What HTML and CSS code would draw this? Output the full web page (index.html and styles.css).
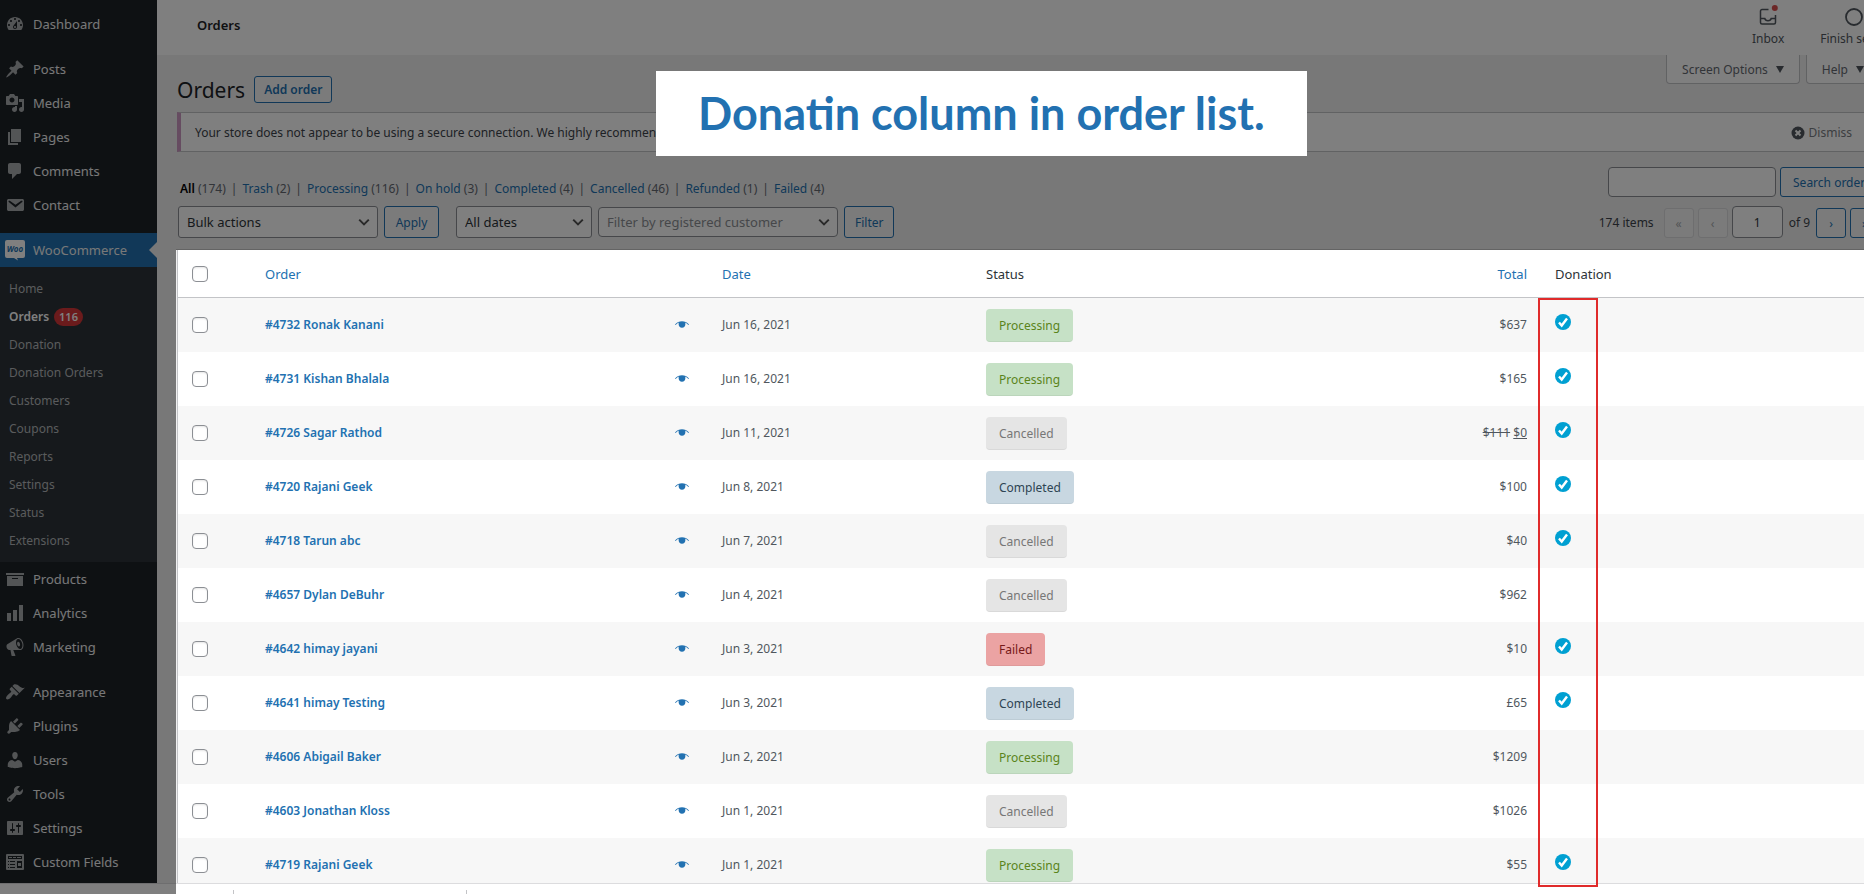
FILE: index.html
```
<!DOCTYPE html>
<html lang="en">
<head>
  <meta charset="UTF-8" />
  <meta name="viewport" content="width=device-width, initial-scale=1.0"/>
  <title>Orders</title>
  <link rel="stylesheet" href="styles.css">
</head>
<body>
  <svg class="sprite" aria-hidden="true">
    <symbol id="eye" viewBox="0 0 14 8">
      <path d="M0 3.600C2 1.300 4.300 .3 7 .3s5 1 7 3.300l-.6.5C12.300 2.900 11.300 2 10.200 1.500c.1.400.2.900.2 1.500C10.400 5.200 9 6.700 7 6.700S3.600 5.200 3.600 3c0-.6.1-1.100.2-1.500C2.700 2 1.700 2.900.6 4.100z"/>
    </symbol>
    <symbol id="check" viewBox="0 0 16 16">
      <circle cx="8" cy="8" r="8"/>
      <path d="M4 8.500l2.700 3L12 4.500" fill="none" stroke="#fff" stroke-width="2.400"/>
    </symbol>
  </svg>

  <div class="app">
    <nav class="sidebar">
      <ul class="menu">
        <li><a href="#"><svg viewBox="0 0 20 20"><path d="M3.76 16h12.480c1.100-1.370 1.760-3.110 1.760-5 0-4.420-3.580-8-8-8s-8 3.580-8 8c0 1.890.66 3.630 1.760 5zM10 4c.55 0 1 .45 1 1s-.45 1-1 1-1-.45-1-1 .45-1 1-1zM6 6c.55 0 1 .45 1 1s-.45 1-1 1-1-.45-1-1 .45-1 1-1zm8 0c.55 0 1 .45 1 1s-.45 1-1 1-1-.45-1-1 .45-1 1-1zm-5.370 5.550L12 7v6c0 1.100-.9 2-2 2s-2-.9-2-2c0-.57.24-1.080.63-1.450zM4 10c.55 0 1 .45 1 1s-.45 1-1 1-1-.45-1-1 .45-1 1-1zm12 0c.55 0 1 .45 1 1s-.45 1-1 1-1-.45-1-1 .45-1 1-1zm-5 3c0-.55-.45-1-1-1s-1 .45-1 1 .45 1 1 1 1-.45 1-1z"/></svg>Dashboard</a></li>
        <li class="separator"></li>
        <li><a href="#"><svg viewBox="0 0 20 20"><path d="M10.440 3.020l1.820-1.820 6.360 6.350-1.830 1.820c-1.050-.68-2.480-.57-3.410.36l-.75.75c-.92.93-1.040 2.350-.35 3.410l-1.830 1.820-2.410-2.410-2.800 2.790c-.42.42-3.380 2.710-3.800 2.290s1.860-3.390 2.280-3.810l2.790-2.790L4.100 9.360l1.830-1.820c1.050.69 2.480.57 3.400-.36l.75-.75c.93-.92 1.050-2.350.36-3.410z"/></svg>Posts</a></li>
        <li><a href="#"><svg viewBox="0 0 20 20"><path d="M13 11V4c0-.55-.45-1-1-1h-1.670L9 1H5L3.670 3H2c-.55 0-1 .45-1 1v7c0 .55.45 1 1 1h10c.55 0 1-.45 1-1zM7 4.500c1.380 0 2.500 1.120 2.500 2.500S8.380 9.500 7 9.500 4.500 8.380 4.500 7 5.620 4.500 7 4.500zM14 6h5v10.500c0 1.380-1.120 2.500-2.500 2.500S14 17.880 14 16.500s1.120-2.500 2.500-2.500c.17 0 .34.02.5.05V9h-3V6zm-4 8.050V13h2v3.500c0 1.380-1.120 2.500-2.500 2.500S7 17.880 7 16.500 8.120 14 9.500 14c.17 0 .34.02.5.05z"/></svg>Media</a></li>
        <li><a href="#"><svg viewBox="0 0 20 20"><path d="M6 15V2h10v13H6zm-1 1h8v2H3V5h2v11z"/></svg>Pages</a></li>
        <li><a href="#"><svg viewBox="0 0 20 20"><path d="M5 2h9c1.100 0 2 .9 2 2v7c0 1.100-.9 2-2 2h-2l-5 5v-5H5c-1.100 0-2-.9-2-2V4c0-1.100.9-2 2-2z"/></svg>Comments</a></li>
        <li><a href="#"><svg viewBox="0 0 20 20"><path d="M3.870 4h13.250C18.370 4 19 4.590 19 5.790v8.420c0 1.190-.63 1.790-1.880 1.790H3.870c-1.250 0-1.880-.6-1.880-1.790V5.790c0-1.200.63-1.790 1.880-1.790zm6.620 8.600l6.740-5.530c.24-.2.43-.66.13-1.070-.29-.41-.82-.42-1.170-.17l-5.700 3.860L4.800 5.830c-.35-.25-.88-.24-1.170.17-.3.41-.11.87.13 1.070z"/></svg>Contact</a></li>
        <li class="separator"></li>
        <li class="current">
          <a href="#"><svg viewBox="0 0 20 20"><path fill="#fff" d="M2 0h16a2 2 0 0 1 2 2v14a2 2 0 0 1-2 2h-6l1 2.500L9 18H2a2 2 0 0 1-2-2V2a2 2 0 0 1 2-2z"/><text x="10" y="12" text-anchor="middle" class="woo">Woo</text></svg>WooCommerce</a>
          <ul class="submenu">
            <li><a href="#">Home</a></li>
            <li><a href="#" class="active">Orders <span class="count">116</span></a></li>
            <li><a href="#">Donation</a></li>
            <li><a href="#">Donation Orders</a></li>
            <li><a href="#">Customers</a></li>
            <li><a href="#">Coupons</a></li>
            <li><a href="#">Reports</a></li>
            <li><a href="#">Settings</a></li>
            <li><a href="#">Status</a></li>
            <li><a href="#">Extensions</a></li>
          </ul>
        </li>
        <li><a href="#"><svg viewBox="0 0 20 20"><path d="M19 4v2H1V4h18zM2 7h16v10H2V7zm11 3V9H7v1h6z"/></svg>Products</a></li>
        <li><a href="#"><svg viewBox="0 0 20 20"><path d="M18 18V2h-4v16h4zm-6 0V7H8v11h4zm-6 0v-8H2v8h4z"/></svg>Analytics</a></li>
        <li><a href="#"><svg viewBox="0 0 20 20"><path d="M18.150 5.940c.46 1.620.38 3.220-.02 4.480-.42 1.280-1.260 2.180-2.300 2.480-.16.06-.26.06-.4.06-.06.02-.12.02-.18.02-.06.02-.14.02-.22.02h-6.800l2.220 5.500c.02.14-.06.26-.14.34-.08.1-.24.16-.34.16H6.950c-.1 0-.26-.06-.34-.16-.08-.08-.16-.2-.14-.34l-1-5.500H4.250l-.02-.02c-.5.06-1.080-.18-1.540-.62s-.88-1.080-1.060-1.880c-.24-.8-.2-1.560-.02-2.200.18-.62.58-1.080 1.060-1.300l.02-.02 9-5.400c.1-.06.18-.1.24-.16.06-.04.14-.08.24-.12.16-.08.28-.12.5-.18 1.040-.3 2.240.1 3.220.98s1.840 2.240 2.260 3.860zm-2.580 5.980h-.02c.4-.1.74-.34 1.040-.7.58-.7.86-1.760.86-3.040 0-.64-.1-1.300-.28-1.980-.34-1.360-1.020-2.500-1.780-3.240s-1.680-1.100-2.460-.88c-.82.22-1.400.96-1.700 2-.32 1.040-.28 2.360.06 3.720.38 1.360 1 2.500 1.800 3.240.78.74 1.620 1.100 2.480.88zm-2.540-7.080c.22-.04.42-.02.62.04.38.16.76.48 1.020 1s.42 1.200.42 1.780c0 .3-.04.56-.12.8-.18.48-.44.84-.86.94-.34.1-.8-.06-1.140-.4s-.64-.86-.78-1.500c-.18-.62-.12-1.240.02-1.720s.48-.84.82-.94z"/></svg>Marketing</a></li>
        <li class="separator"></li>
        <li><a href="#"><svg viewBox="0 0 20 20"><path d="M14.480 11.060L7.410 3.990l1.500-1.500c.5-.56 2.300-.47 3.510.32 1.210.8 1.430 1.280 2.910 2.100 1.180.64 2.450 1.260 4.450.85zm-.71.71L6.700 4.700 4.930 6.470c-.39.39-.39 1.020 0 1.410l1.060 1.060c.39.39.39 1.030 0 1.420-.6.6-1.430 1.110-2.210 1.690-.35.26-.7.53-1.010.84C1.430 14.230.4 16.080 1.400 17.070c.99 1 2.840-.03 4.180-1.360.31-.31.58-.66.85-1.020.57-.78 1.080-1.610 1.690-2.210.39-.39 1.020-.39 1.410 0l1.060 1.060c.39.39 1.020.39 1.410 0z"/></svg>Appearance</a></li>
        <li><a href="#"><svg viewBox="0 0 20 20"><path d="M13.110 4.360L9.870 7.600 8 5.730l3.240-3.240c.35-.34 1.050-.2 1.560.32.52.51.66 1.210.31 1.550zm-8 1.770l.91-1.120 9.010 9.010-1.190.84c-.71.71-2.630 1.160-3.820 1.160H6.140L4.900 17.260c-.59.59-1.540.59-2.120 0-.59-.58-.59-1.530 0-2.120l1.240-1.240v-3.880c0-1.130.4-3.190 1.090-3.890zm7.260 3.970l3.240-3.240c.34-.35 1.040-.21 1.550.31.52.51.66 1.210.31 1.550l-3.240 3.250z"/></svg>Plugins</a></li>
        <li><a href="#"><svg viewBox="0 0 20 20"><path d="M10 9.250c-2.270 0-2.730-3.440-2.730-3.440C7 4.020 7.820 2 9.970 2c2.160 0 2.980 2.020 2.710 3.810 0 0-.41 3.440-2.680 3.440zm0 2.570L12.720 10c2.390 0 4.520 2.330 4.520 4.530v2.490s-3.650 1.130-7.240 1.130c-3.650 0-7.240-1.130-7.240-1.130v-2.490c0-2.250 1.940-4.480 4.470-4.480z"/></svg>Users</a></li>
        <li><a href="#"><svg viewBox="0 0 20 20"><path d="M16.680 9.770c-1.340 1.340-3.300 1.670-4.950.99l-5.410 6.520c-.99.99-2.590.99-3.580 0s-.99-2.590 0-3.570l6.520-5.420c-.68-1.650-.35-3.610.99-4.950 1.280-1.280 3.120-1.620 4.720-1.060l-2.890 2.890 2.820 2.820 2.860-2.870c.53 1.580.18 3.390-1.080 4.650zM3.810 16.210c.4.39 1.040.39 1.430 0 .4-.4.4-1.040 0-1.430-.39-.4-1.030-.4-1.430 0-.39.39-.39 1.030 0 1.430z"/></svg>Tools</a></li>
        <li><a href="#"><svg viewBox="0 0 20 20"><path d="M18 16V4c0-.55-.45-1-1-1H3c-.55 0-1 .45-1 1v12c0 .55.45 1 1 1h14c.55 0 1-.45 1-1zM8 11h1c.55 0 1 .45 1 1s-.45 1-1 1H8v1.500c0 .28-.22.5-.5.5s-.5-.22-.5-.5V13H6c-.55 0-1-.45-1-1s.45-1 1-1h1V5.500c0-.28.22-.5.5-.5s.5.22.5.5V11zm5-2h-1c-.55 0-1-.45-1-1s.45-1 1-1h1V5.500c0-.28.22-.5.5-.5s.5.22.5.5V7h1c.55 0 1 .45 1 1s-.45 1-1 1h-1v5.500c0 .28-.22.5-.5.5s-.5-.22-.5-.5V9z"/></svg>Settings</a></li>
        <li><a href="#"><svg viewBox="0 0 20 20"><path fill-rule="evenodd" d="M2 2h16a1 1 0 0 1 1 1v14a1 1 0 0 1-1 1H2a1 1 0 0 1-1-1V3a1 1 0 0 1 1-1zM3 4v3h14V4zM3 9v1h1V9zm2 0v1h5V9zM3 12v1h1v-1zm2 0v1h5v-1zM3 15v1h1v-1zm2 0v1h5v-1zM12 9v7h5V9zM4 5h3v1H4zm4 0h3v1H8zm4 0h4v1h-4zM13 11h3v3h-3z"/></svg>Custom Fields</a></li>
      </ul>
    </nav>

    <main class="page">
      <header class="topbar">
        <h2>Orders</h2>
        <div class="activity">
          <button type="button" class="inbox">
            <svg viewBox="0 0 18 18"><path d="M9.500 1.500H3a1.500 1.500 0 0 0-1.500 1.500v11.500A1.500 1.500 0 0 0 3 16h12a1.500 1.500 0 0 0 1.500-1.500V7M1.500 10.500h4.300c.4 1.700 1.500 2.200 3.200 2.200s2.800-.5 3.200-2.200h4.300" fill="none" stroke="#50575e" stroke-width="1.500"/><circle cx="15.800" cy="0" r="3" fill="#d94f4f"/></svg>
            Inbox
          </button>
          <button type="button">
            <svg viewBox="0 0 18 18"><circle cx="9" cy="9" r="8" fill="none" stroke="#50575e" stroke-width="1.800"/></svg>
            Finish setup
          </button>
        </div>
      </header>

      <div class="wrap">
        <div class="heading">
          <h1>Orders</h1>
          <a href="#" class="button add">Add order</a>
          <div class="screen-tabs">
            <button type="button">Screen Options <span class="arrow"></span></button>
            <button type="button">Help <span class="arrow"></span></button>
          </div>
        </div>

        <div class="notice">
          <p>Your store does not appear to be using a secure connection. We highly recommend serving your entire website over an HTTPS connection to help keep customer data secure.</p>
          <a href="#" class="dismiss"><svg viewBox="0 0 14 14"><circle cx="7" cy="7" r="6.500" fill="#50575e"/><path d="M4.500 4.500l5 5m0-5l-5 5" stroke="#fff" stroke-width="2"/></svg>Dismiss</a>
        </div>

        <div class="views-row">
          <ul class="views">
            <li><a href="#" class="all">All</a> (174)</li>
            <li><a href="#">Trash</a> (2)</li>
            <li><a href="#">Processing</a> (116)</li>
            <li><a href="#">On hold</a> (3)</li>
            <li><a href="#">Completed</a> (4)</li>
            <li><a href="#">Cancelled</a> (46)</li>
            <li><a href="#">Refunded</a> (1)</li>
            <li><a href="#">Failed</a> (4)</li>
          </ul>
          <div class="search">
            <input type="search" aria-label="Search orders">
            <button type="button" class="button">Search orders</button>
          </div>
        </div>

        <div class="tablenav">
          <div class="filters">
            <select class="bulk" aria-label="Bulk actions"><option>Bulk actions</option></select>
            <button type="button" class="button apply">Apply</button>
            <select class="dates" aria-label="Filter by date"><option>All dates</option></select>
            <select class="customer" aria-label="Customer"><option>Filter by registered customer</option></select>
            <button type="button" class="button">Filter</button>
          </div>
          <div class="pagination">
            <span class="total-items">174 items</span>
            <button type="button" class="button" disabled>«</button>
            <button type="button" class="button" disabled>‹</button>
            <input type="text" value="1" aria-label="Current page">
            <span class="of">of 9</span>
            <button type="button" class="button">›</button>
            <button type="button" class="button">»</button>
          </div>
        </div>

        <div class="highlight">
          <div class="table-clip">
            <table class="orders">
              <thead>
                <tr>
                  <th class="col-check"><input type="checkbox" aria-label="Select all"></th>
                  <th class="col-order"><a href="#">Order</a></th>
                  <th class="col-date"><a href="#">Date</a></th>
                  <th class="col-status">Status</th>
                  <th class="col-total"><a href="#">Total</a></th>
                  <th class="col-donation">Donation</th>
                </tr>
              </thead>
              <tbody>
                <tr>
                  <td class="col-check"><input type="checkbox" aria-label="Select #4732"></td>
                  <td class="col-order"><div><a href="#">#4732 Ronak Kanani</a><svg class="eye"><use href="#eye"/></svg></div></td>
                  <td class="col-date">Jun 16, 2021</td>
                  <td><span class="status processing">Processing</span></td>
                  <td class="col-total">$637</td>
                  <td class="col-donation"><svg class="check"><use href="#check"/></svg></td>
                </tr>
                <tr>
                  <td class="col-check"><input type="checkbox" aria-label="Select #4731"></td>
                  <td class="col-order"><div><a href="#">#4731 Kishan Bhalala</a><svg class="eye"><use href="#eye"/></svg></div></td>
                  <td class="col-date">Jun 16, 2021</td>
                  <td><span class="status processing">Processing</span></td>
                  <td class="col-total">$165</td>
                  <td class="col-donation"><svg class="check"><use href="#check"/></svg></td>
                </tr>
                <tr>
                  <td class="col-check"><input type="checkbox" aria-label="Select #4726"></td>
                  <td class="col-order"><div><a href="#">#4726 Sagar Rathod</a><svg class="eye"><use href="#eye"/></svg></div></td>
                  <td class="col-date">Jun 11, 2021</td>
                  <td><span class="status cancelled">Cancelled</span></td>
                  <td class="col-total"><del>$111</del> <ins>$0</ins></td>
                  <td class="col-donation"><svg class="check"><use href="#check"/></svg></td>
                </tr>
                <tr>
                  <td class="col-check"><input type="checkbox" aria-label="Select #4720"></td>
                  <td class="col-order"><div><a href="#">#4720 Rajani Geek</a><svg class="eye"><use href="#eye"/></svg></div></td>
                  <td class="col-date">Jun 8, 2021</td>
                  <td><span class="status completed">Completed</span></td>
                  <td class="col-total">$100</td>
                  <td class="col-donation"><svg class="check"><use href="#check"/></svg></td>
                </tr>
                <tr>
                  <td class="col-check"><input type="checkbox" aria-label="Select #4718"></td>
                  <td class="col-order"><div><a href="#">#4718 Tarun abc</a><svg class="eye"><use href="#eye"/></svg></div></td>
                  <td class="col-date">Jun 7, 2021</td>
                  <td><span class="status cancelled">Cancelled</span></td>
                  <td class="col-total">$40</td>
                  <td class="col-donation"><svg class="check"><use href="#check"/></svg></td>
                </tr>
                <tr>
                  <td class="col-check"><input type="checkbox" aria-label="Select #4657"></td>
                  <td class="col-order"><div><a href="#">#4657 Dylan DeBuhr</a><svg class="eye"><use href="#eye"/></svg></div></td>
                  <td class="col-date">Jun 4, 2021</td>
                  <td><span class="status cancelled">Cancelled</span></td>
                  <td class="col-total">$962</td>
                  <td class="col-donation"></td>
                </tr>
                <tr>
                  <td class="col-check"><input type="checkbox" aria-label="Select #4642"></td>
                  <td class="col-order"><div><a href="#">#4642 himay jayani</a><svg class="eye"><use href="#eye"/></svg></div></td>
                  <td class="col-date">Jun 3, 2021</td>
                  <td><span class="status failed">Failed</span></td>
                  <td class="col-total">$10</td>
                  <td class="col-donation"><svg class="check"><use href="#check"/></svg></td>
                </tr>
                <tr>
                  <td class="col-check"><input type="checkbox" aria-label="Select #4641"></td>
                  <td class="col-order"><div><a href="#">#4641 himay Testing</a><svg class="eye"><use href="#eye"/></svg></div></td>
                  <td class="col-date">Jun 3, 2021</td>
                  <td><span class="status completed">Completed</span></td>
                  <td class="col-total">£65</td>
                  <td class="col-donation"><svg class="check"><use href="#check"/></svg></td>
                </tr>
                <tr>
                  <td class="col-check"><input type="checkbox" aria-label="Select #4606"></td>
                  <td class="col-order"><div><a href="#">#4606 Abigail Baker</a><svg class="eye"><use href="#eye"/></svg></div></td>
                  <td class="col-date">Jun 2, 2021</td>
                  <td><span class="status processing">Processing</span></td>
                  <td class="col-total">$1209</td>
                  <td class="col-donation"></td>
                </tr>
                <tr>
                  <td class="col-check"><input type="checkbox" aria-label="Select #4603"></td>
                  <td class="col-order"><div><a href="#">#4603 Jonathan Kloss</a><svg class="eye"><use href="#eye"/></svg></div></td>
                  <td class="col-date">Jun 1, 2021</td>
                  <td><span class="status cancelled">Cancelled</span></td>
                  <td class="col-total">$1026</td>
                  <td class="col-donation"></td>
                </tr>
                <tr>
                  <td class="col-check"><input type="checkbox" aria-label="Select #4719"></td>
                  <td class="col-order"><div><a href="#">#4719 Rajani Geek</a><svg class="eye"><use href="#eye"/></svg></div></td>
                  <td class="col-date">Jun 1, 2021</td>
                  <td><span class="status processing">Processing</span></td>
                  <td class="col-total">$55</td>
                  <td class="col-donation"><svg class="check"><use href="#check"/></svg></td>
                </tr>
              </tbody>
            </table>
          </div>
          <div class="marker"></div>
        </div>
      </div>
    </main>
  </div>

  <footer class="bottom-bar">
    <div class="bar-left"></div>
    <div class="bar-right"><span class="tick"></span><span class="tick wide"></span></div>
  </footer>

  <div class="dim"></div>
  <div class="caption">Donatin column in order list.</div>
</body>
</html>
```
FILE: styles.css
```
* {
  box-sizing: border-box;
}

body {
  font-family: "Noto Sans", "Open Sans", sans-serif;
  font-size: 12px;
  line-height: 18px;
  margin: 0;
  height: 100vh;
  display: flex;
  flex-direction: column;
  overflow: hidden;
  position: relative;
  background: #f0f0f1;
  color: #3c434a;
}

a {
  color: #2271b1;
  text-decoration: none;
}

ul {
  list-style: none;
  margin: 0;
  padding: 0;
}

button,
input,
select {
  font-family: inherit;
  font-size: 12px;
}

.sprite {
  display: none;
}

.app {
  flex: 1;
  min-height: 0;
  display: flex;
}

/* sidebar */
.sidebar {
  width: 157px;
  flex-shrink: 0;
  padding-top: 7px;
  background: #1d2327;
  overflow: hidden;
}

.menu > li > a {
  display: flex;
  align-items: center;
  gap: 8px;
  height: 34px;
  padding-left: 5px;
  color: #f0f0f1;
  font-size: 13px;
}

.menu > li > a svg {
  width: 20px;
  height: 20px;
  overflow: visible;
  fill: #a7aaad;
}

.separator {
  height: 11px;
}

.current > a {
  position: relative;
  background: #2271b1;
}

.current > a::after {
  content: "";
  position: absolute;
  right: 0;
  top: 9px;
  border: 8px solid transparent;
  border-right-color: #f0f0f1;
  border-left-width: 0;
}

.woo {
  font-size: 8px;
  font-weight: bold;
  font-style: italic;
  fill: #2271b1;
}

.submenu {
  padding: 8px 0 7px;
  background: #2c3338;
}

.submenu a {
  display: flex;
  align-items: center;
  gap: 5px;
  height: 28px;
  padding-left: 9px;
  color: #b4b7ba;
}

.submenu .active {
  color: #fff;
  font-weight: 600;
}

.count {
  height: 18px;
  padding: 0 5px;
  border-radius: 9px;
  background: #d63638;
  font-size: 11px;
}

/* page area, the right end runs past the window edge */
.page {
  flex-shrink: 0;
  width: calc(100% - 117px);
  display: flex;
  flex-direction: column;
}

.topbar {
  display: flex;
  justify-content: space-between;
  height: 55px;
  padding: 0 16px 0 40px;
  background: #fff;
}

.topbar h2 {
  margin: 0;
  font-size: 13px;
  font-weight: 600;
  line-height: 50px;
  color: #1d2327;
}

.activity {
  display: flex;
  gap: 36px;
  padding-top: 8px;
}

.activity button {
  display: flex;
  flex-direction: column;
  align-items: center;
  gap: 4px;
  padding: 0;
  border: none;
  background: none;
  color: #50575e;
  line-height: 18px;
}

.activity svg {
  width: 18px;
  height: 18px;
  overflow: visible;
}

.wrap {
  flex: 1;
  min-height: 0;
  display: flex;
  flex-direction: column;
  padding: 0 20px;
}

.heading {
  display: flex;
  align-items: flex-end;
  height: 48px;
}

h1 {
  margin: 0 9px 0 0;
  font-size: 21px;
  font-weight: 400;
  line-height: 26px;
  color: #1d2327;
}

.button {
  height: 32px;
  padding: 0 10px;
  border: 1px solid #2271b1;
  border-radius: 3px;
  background: #f6f7f7;
  color: #2271b1;
}

.add {
  height: 27px;
  padding: 0 9px;
  line-height: 25px;
  font-weight: 600;
}

.screen-tabs {
  display: flex;
  gap: 6px;
  align-self: flex-start;
  margin: 0 4px 0 auto;
}

.screen-tabs button {
  display: flex;
  align-items: center;
  gap: 8px;
  height: 29px;
  padding: 0 15px;
  border: 1px solid #c3c4c7;
  border-top: none;
  border-radius: 0 0 4px 4px;
  background: #fff;
  color: #646970;
}

.arrow {
  border: 4px solid transparent;
  border-top: 7px solid #50575e;
  border-bottom: none;
}

.notice {
  display: flex;
  justify-content: space-between;
  align-items: center;
  height: 40px;
  margin-top: 9px;
  padding: 2px 31px 0 14px;
  border: 1px solid #c3c4c7;
  border-left: 4px solid #cc99c2;
  background: #fff;
}

.notice p {
  margin: 0;
}

.dismiss {
  display: flex;
  align-items: center;
  gap: 4px;
  color: #787c82;
}

.dismiss svg {
  width: 14px;
  height: 14px;
}

.views-row {
  display: flex;
  justify-content: space-between;
  margin-top: 15px;
}

.views {
  display: flex;
  align-self: flex-end;
  padding-left: 3px;
  line-height: 16px;
  color: #646970;
}

.views li + li::before {
  content: "|";
  margin: 0 5px;
}

.views .all {
  color: #000;
  font-weight: 600;
}

.search {
  display: flex;
  gap: 4px;
}

.search input {
  width: 168px;
}

.search .button {
  width: 104px;
  height: 30px;
}

input[type="search"],
input[type="text"] {
  height: 30px;
  border: 1px solid #8c8f94;
  border-radius: 4px;
  background: #fff;
  color: #2c3338;
}

.tablenav {
  display: flex;
  justify-content: space-between;
  margin-top: 9px;
  padding-bottom: 12px;
}

.filters {
  display: flex;
  align-items: center;
  gap: 6px;
  padding-left: 1px;
}

select {
  height: 32px;
  padding: 0 24px 0 8px;
  border: 1px solid #8c8f94;
  border-radius: 3px;
  appearance: none;
  background: #fff url("data:image/svg+xml,%3Csvg xmlns='http://www.w3.org/2000/svg' viewBox='0 0 20 20'%3E%3Cpath d='M4 7l6 6 6-6' fill='none' stroke='%23555' stroke-width='2.500'/%3E%3C/svg%3E") no-repeat right 5px center;
  background-size: 16px;
  color: #2c3338;
  font-size: 13px;
}

.bulk {
  width: 200px;
}

.apply {
  width: 55px;
  margin-right: 11px;
}

.dates {
  width: 136px;
}

.customer {
  width: 240px;
  height: 30px;
  border-radius: 4px;
  color: #8c8f94;
}

.pagination {
  display: flex;
  align-items: flex-end;
  gap: 4px;
  padding-right: 4px;
}

.pagination span {
  line-height: 30px;
}

.total-items {
  margin-right: 6px;
}

.pagination .of {
  padding: 0 2px;
}

.pagination .button {
  width: 30px;
  height: 30px;
  padding: 0;
}

.pagination .button:disabled {
  border-color: #dcdcde;
  color: #a7aaad;
}

.pagination input {
  width: 51px;
  height: 32px;
  text-align: center;
}

/* table, shown above the dimmed page */
.highlight {
  flex: 1;
  min-height: 0;
  display: flex;
  position: relative;
  z-index: 20;
  margin-left: -1px;
  padding-left: 1px;
  background: #f0f0f1;
  box-shadow: 0 -1px #646464;
}

.table-clip {
  flex: 1;
  overflow: hidden;
  border-left: 1px solid #c3c4c7;
  background: #fff;
}

.marker {
  position: absolute;
  top: 48px;
  bottom: -4px;
  right: 286px;
  width: 60px;
  border: 2px solid #e02b2b;
}

.orders {
  width: 100%;
  table-layout: fixed;
  border-collapse: separate;
  border-spacing: 0;
}

.orders th {
  height: 48px;
  padding: 0 12px;
  border-bottom: 1px solid #c3c4c7;
  font-size: 13px;
  font-weight: 400;
  text-align: left;
  color: #2c3338;
}

.orders td {
  height: 54px;
  padding: 0 12px;
  color: #50575e;
}

.orders tbody tr:nth-child(odd) {
  background: #f7f7f7;
}

.orders .col-check {
  width: 75px;
  padding: 0 0 0 14px;
}

.col-order {
  width: 457px;
}

.col-date {
  width: 264px;
}

.orders .col-total {
  width: 160px;
  text-align: right;
}

.orders .col-donation {
  width: 345px;
  padding: 0 16px;
}

.orders td.col-donation {
  padding-bottom: 6px;
}

.col-order div {
  display: flex;
  align-items: center;
  justify-content: space-between;
  padding-right: 9px;
}

.col-order div a {
  font-weight: 600;
}

.eye {
  width: 14px;
  height: 8px;
  fill: #2271b1;
}

.check {
  display: block;
  width: 16px;
  height: 16px;
  fill: #00a0d2;
}

input[type="checkbox"] {
  display: block;
  width: 16px;
  height: 16px;
  margin: 0;
  appearance: none;
  border: 1px solid #8c8f94;
  border-radius: 4px;
  background: #fff;
  box-shadow: inset 0 1px 2px rgba(0,0,0,0.1);
}

.status {
  display: inline-block;
  height: 33px;
  padding: 0 13px;
  border-bottom: 1px solid rgba(0,0,0,0.05);
  border-radius: 4px;
  line-height: 33px;
  vertical-align: middle;
}

.processing {
  background: #c6e1c6;
  color: #5b841b;
}

.cancelled {
  background: #e5e5e5;
  color: #777;
}

.completed {
  background: #c8d7e1;
  color: #2e4453;
}

.failed {
  background: #eba3a3;
  color: #761919;
}

.bottom-bar {
  display: flex;
  height: 11px;
}

.bar-left,
.bar-right {
  border-top: 1px solid #dcdcde;
  background: #fff;
}

.bar-left {
  width: 176px;
}

.bar-right {
  flex: 1;
  display: flex;
  align-items: flex-end;
  position: relative;
  z-index: 15;
}

.tick {
  width: 58px;
  height: 4px;
  border-right: 1px solid #c3c4c7;
}

.tick.wide {
  width: 233px;
}

.dim {
  position: absolute;
  inset: 0;
  z-index: 10;
  background: rgba(0,0,0,0.5);
}

.caption {
  position: absolute;
  top: 71px;
  left: 656px;
  z-index: 30;
  padding: 0 42px;
  background: #fff;
  color: #2271b1;
  font-family: Lato, sans-serif;
  font-size: 45px;
  font-weight: bold;
  line-height: 85px;
  white-space: nowrap;
}
```
